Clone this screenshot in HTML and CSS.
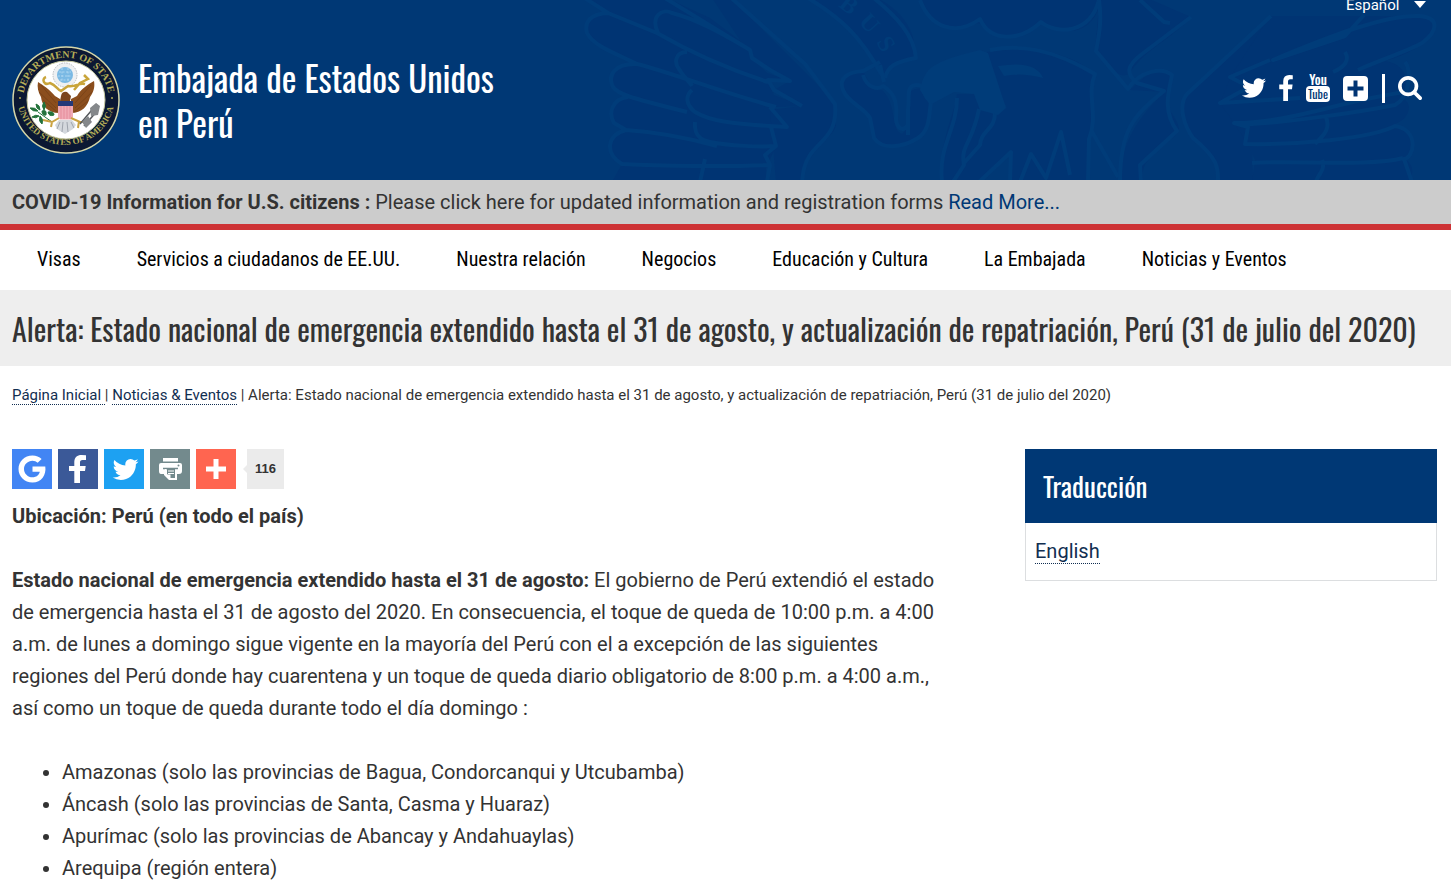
FILE: index.html
```html
<!DOCTYPE html>
<html lang="es">
<head>
<meta charset="utf-8">
<meta name="viewport" content="width=device-width, initial-scale=1">
<title>Embajada de Estados Unidos en Perú</title>
<link rel="stylesheet" href="styles.css">
</head>
<body>
<header class="site-header">
  <svg class="header-art" viewBox="0 0 871 180" aria-hidden="true">
    <g class="art-shape">
      <path d="M0 -5L28 13C15 12 5 20 6 30C10 45 30 52 57 64C42 62 32 68 31 78C32 88 40 93 48 97C37 97 31 105 30 115C31 124 40 129 46 132C34 134 29 141 29 150C31 158 38 162 42 164L32 182H186V168L196 146L194 132L207 127L195 107L222 106L194 95L188 82L210 81L187 73L172 58L170 48L130 18L80 -5Z"/>
      <path d="M148 -5L256 103V125C253 140 225 150 222 182H196L190 110L222 106L194 90L210 81L172 58L130 -5Z" />
      <path d="M225 -5C265 20 285 40 296 66C300 75 304 80 304 76C310 65 320 62 332 60C340 45 330 10 290 -5Z"/>
      <path d="M283 71C268 72 260 77 262 88C266 104 290 110 292 122C291 140 300 146 310 146C340 144 350 130 351 110C354 95 342 82 330 92C325 105 332 127 322 134C310 130 318 105 302 90C292 91 288 80 283 71Z"/>
      <path d="M340 -5C346 15 355 30 378 29C392 25 398 20 405 26C425 45 450 38 461 22C480 35 515 40 522 -5Z"/>
      <path d="M407 52C455 44 500 55 515 77C505 100 516 120 508 140L509 182H432L430 155L400 182H363C358 140 375 115 377 94H394C400 120 420 105 427 108C415 80 405 65 407 52Z"/>
      <path d="M520 -5L515 52C530 66 540 80 548 74L560 60C575 45 595 35 611 17L560 -5Z"/>
      <path d="M550 90C568 72 578 68 590 71C595 80 586 98 588 108C600 125 605 132 586 142C570 155 560 165 563 182H540C540 140 563 112 585 92Z"/>
      <path d="M691 16L606 95C599 105 602 122 613 138C635 158 638 168 638 182H673L672 150L665 138L668 127L654 123L665 112L640 103L669 91L650 75L688 60C693 50 735 28 750 16Z"/>
      <path d="M690 16H845C858 18 854 34 840 45C830 53 818 57 805 61C825 64 832 80 820 98C833 100 832 118 815 124C837 130 835 154 823 158C834 164 834 172 829 182H672L675 160L665 140L654 123L640 103L651 76Z"/>
    </g>
    <g class="art-line">
      <path d="M0 -5L28 13L77 33C110 52 151 70 188 82M28 13C10 14 4 22 7 33C13 46 37 54 57 64M78 33C70 16 82 8 92 13C117 19 146 36 170 50L172 58L190 70L210 81L188 80L194 90L222 106M80 -5L170 50M57 64C35 63 27 75 33 87C38 94 47 97 107 112M57 64C90 72 140 92 196 107M107 52C95 52 94 63 99 69C104 78 110 82 112 86M48 97C32 99 28 113 34 123L46 130M112 90C105 96 106 105 115 112C130 121 150 124 207 127L190 107M115 122C114 135 120 140 130 142C150 146 180 147 196 146L191 127M46 130C80 132 115 140 137 146M46 130C27 135 24 153 42 164C80 166 146 167 190 165L187 182M125 159L120 182M196 146L185 155L190 165"/>
      <path d="M148 -5L225 64L255 104C258 135 240 140 230 155C224 164 223 172 222 182M223 -5C262 18 280 36 302 75M290 -5C318 17 334 36 336 58C315 62 308 66 305 78"/>
      <path d="M300 62L283 71C268 72 258 78 263 90C268 103 284 107 290 118L294 138C302 150 322 148 338 138C350 130 349 115 351 101C340 96 348 85 337 85C325 85 330 98 328 109V135M283 75C287 88 298 90 303 86C317 94 317 107 316 119C317 129 323 132 328 125M304 82L300 65"/>
      <path d="M340 0C350 27 375 37 400 19C410 42 440 42 461 22C477 35 510 34 519 0M410 50C440 44 473 49 515 74C506 95 519 115 509 139L508 182M377 98C377 130 358 145 362 182M399 109C392 145 380 145 384 165L373 182M384 163L400 145C401 130 415 130 415 113M399 182L431 152L430 182M440 182L451 154L466 178L481 132L490 175M511 130L538 177"/>
      <path d="M519 0C522 22 519 35 516 51L548 89C560 70 583 67 592 75C589 91 582 110 597 131L560 165L561 182M560 0L584 22L590 23M611 17L562 54C546 66 546 74 557 83L584 91C552 116 540 132 540 182M691 16L607 94C597 106 605 127 613 138C640 160 638 170 638 182"/>
      <path d="M784 15L765 36L693 60C750 36 807 14 840 16C860 18 858 31 842 43C828 51 795 62 778 70M765 52C770 60 765 67 753 72M690 60L650 77L669 87L640 103L720 98M654 123C710 123 760 101 825 92M825 62C832 70 830 97 815 105C780 112 710 122 672 124L654 123L668 127L665 144C715 145 790 139 815 126C840 130 834 158 824 159L832 182M745 115C753 130 740 138 735 144M672 163C715 160 790 167 823 158M742 160C746 170 738 174 736 182"/>
      <path class="art-solid" d="M340 90C345 68 350 62 400 50L408 53L426 108L418 115L400 110L394 94L374 92L350 105Z"/>
      <path class="art-solid" d="M418 66Q456 60 463 78Q442 72 424 76Z"/>
    </g>
    <text class="art-text" transform="translate(258 6) rotate(38)">B</text>
    <text class="art-text" transform="translate(278 22) rotate(48)">U</text>
    <text class="art-text" transform="translate(296 42) rotate(60)">S</text>
  </svg>

  <div class="language">
    <select class="language-select" aria-label="Idioma">
      <option>Español</option>
      <option>English</option>
    </select>
    <svg class="language-arrow" viewBox="0 0 12 7" aria-hidden="true"><path d="M0 0H12L6 7Z"/></svg>
  </div>

  <div class="masthead">
    <a class="brand" href="#">
      <svg class="seal" viewBox="0 0 108 108" role="img" aria-label="Department of State, United States of America">
        <defs>
          <path id="seal-top" d="M12.500 66A43 43 0 1 1 95.500 66"/>
          <path id="seal-bottom" d="M5 50A49 49 0 1 0 103 50"/>
        </defs>
        <circle cx="54" cy="54" r="53" fill="#0b1833" stroke="#d5d6a8" stroke-width="1.500"/>
        <circle cx="54" cy="54" r="39" fill="#fff" stroke="#c7c9a0"/>
        <text class="seal-text"><textPath href="#seal-top" startOffset="50%" text-anchor="middle">DEPARTMENT OF STATE</textPath></text>
        <text class="seal-text seal-text-lower"><textPath href="#seal-bottom" startOffset="50%" text-anchor="middle">UNITED STATES OF AMERICA</textPath></text>
        <circle cx="8" cy="52" r="1" fill="#b5ad57"/><circle cx="100" cy="52" r="1" fill="#b5ad57"/>
        <circle cx="53" cy="29" r="12" fill="#eef0f2" stroke="#b9bdc3" stroke-dasharray="1.500 1"/>
        <circle cx="53" cy="29" r="8" fill="#7ab9e4"/>
        <path d="M47 26h12M46 30h14M48 34h10M50 22v14M56 22v14" stroke="#b9dcf2" stroke-width=".8" stroke-dasharray="2 1.500"/>
        <path d="M47 67C36 67 30 60 29 51C26 46 25 41 26 36C31 39 37 43 43 50L48 53V69ZM59 67C70 67 76 60 78 51C82 46 83 40 82 35C75 39 69 43 65 50L59 53Z" fill="#8b4e1d"/>
        <path d="M29 39L44 57M27 46L44 62M31 54L45 66M79 39L63 57M80 46L63 62M76 55L62 66" stroke="#6f3d16" fill="none" stroke-width=".6"/>
        <path d="M34 31C29 33 32 40 38 37C44 39 45 43 49 45L56 40C63 42 67 36 73 38M72 29L76 33L68 37L62 44" stroke="#c9a53b" fill="none" stroke-width="2.500"/>
        <path d="M49 50Q50 45 55 46L59 50L58 55H48Z" fill="#7b451d"/>
        <path d="M47 74H60L64 79L61 83L53 88L45 83L43 79Z" fill="#d4d8dd"/>
        <path d="M48 76L45 83M51 76L50 86M55 76L56 86M59 76L62 82" stroke="#8f959f" stroke-width=".8"/>
        <path d="M46 56H61V71L59 73.500H48L46 71Z" fill="#f0aab5"/>
        <path d="M49 60V73M52 60V73M55 60V73M58 60V73" stroke="#e58c9b"/>
        <path d="M46 55H61V60H46Z" fill="#243878"/>
        <path d="M24 58q4 1 4 6q-4-1-4-6M18 62q5-1 8 3q-5 1-8-3M20 71q4-3 7-1q-3 3-7 1M32 56q3 4 0 8q-3-4 0-8M30 65q5-2 4 4q-4 1-4-4M28 70q4 3 2 8q-4-3-2-8M36 66q6-1 6 3q-5 2-6-3M26 66l14 10" fill="#23723b" stroke="#23723b" stroke-width="1"/>
        <path d="M31 74L40 76L47 72M59 72L68 76L77 76M40 76L39 81M67 75L66 82" stroke="#cba240" stroke-width="2" fill="none"/>
        <path d="M68 78L85 58M72 80L86 64" stroke="#55585c" stroke-width="1.500" fill="none"/>
        <path d="M78 62L84 57L88 60L86 69L79 70ZM70 76L76 70L80 76L74 82Z" fill="#85888b"/>
      </svg>
      <span class="brand-name">Embajada de Estados Unidos<br>en Perú</span>
    </a>
    <nav class="social" aria-label="Redes sociales">
      <a href="#" aria-label="Twitter"><svg class="ico ico-twitter" viewBox="44 256 1640 1344"><path d="M1684 408q-67 98-162 167 1 14 1 42 0 130-38 259.500t-115.500 248.500-184.500 210.500-258 146-323 54.500q-271 0-496-145 35 4 78 4 225 0 401-138-105-2-188-64.500t-114-159.500q33 5 61 5 43 0 85-11-112-23-185.500-111.500t-73.500-205.500v-4q68 38 146 41-66-44-105-115t-39-154q0-88 44-163 121 149 294.500 238.500t371.500 99.500q-8-38-8-74 0-134 94.500-228.500t228.500-94.500q140 0 236 102 109-21 205-78-37 115-142 178 93-10 186-50z"/></svg></a>
      <a href="#" aria-label="Facebook"><svg class="ico ico-facebook" viewBox="479 0 864 1664"><path d="M1343 12v264h-157q-86 0-116 36t-30 108v189h293l-39 296h-254v759h-306v-759h-255v-296h255v-218q0-186 104-288.500t277-102.500q147 0 228 12z"/></svg></a>
      <a href="#" aria-label="YouTube"><svg class="ico ico-youtube" viewBox="0 0 24 28"><text class="yt-you" x="12" y="10.500" text-anchor="middle">You</text><rect y="12" width="24" height="16" rx="4"/><text class="yt-tube" x="12" y="25" text-anchor="middle">Tube</text></svg></a>
      <a href="#" aria-label="Más"><svg class="ico ico-more" viewBox="0 0 25 25"><path fill-rule="evenodd" d="M4 0H21Q25 0 25 4V21Q25 25 21 25H4Q0 25 0 21V4Q0 0 4 0ZM10.500 4.500V10.500H4.500V14.500H10.500V20.500H14.500V14.500H20.500V10.500H14.500V4.500Z"/></svg></a>
      <span class="social-rule"></span>
      <button class="search" type="button" aria-label="Buscar"><svg class="ico ico-search" viewBox="64 128 1664 1664"><path d="M1216 832q0-185-131.500-316.500t-316.500-131.500-316.500 131.500-131.500 316.500 131.500 316.500 316.500 131.500 316.500-131.500 131.500-316.500zm512 832q0 52-38 90t-90 38q-54 0-90-38l-343-342q-179 124-399 124-143 0-273.500-55.500t-225-150-150-225-55.500-273.500 55.500-273.500 150-225 225-150 273.500-55.500 273.500 55.500 225 150 150 225 55.500 273.500q0 220-124 399l343 343q37 37 37 90z"/></svg></button>
    </nav>
  </div>
</header>

<div class="notice"><strong>COVID-19 Information for U.S. citizens :</strong> Please click here for updated information and registration forms <a href="#">Read More...</a></div>

<nav class="main-nav" aria-label="Principal">
  <a href="#">Visas</a>
  <a href="#">Servicios a ciudadanos de EE.UU.</a>
  <a href="#">Nuestra relación</a>
  <a href="#">Negocios</a>
  <a href="#">Educación y Cultura</a>
  <a href="#">La Embajada</a>
  <a href="#">Noticias y Eventos</a>
</nav>

<h1 class="page-title">Alerta: Estado nacional de emergencia extendido hasta el 31 de agosto, y actualización de repatriación, Perú (31 de julio del 2020)</h1>

<p class="breadcrumb"><a href="#">Página Inicial&nbsp;</a>| <a href="#">Noticias &amp; Eventos</a> | Alerta: Estado nacional de emergencia extendido hasta el 31 de agosto, y actualización de repatriación, Perú (31 de julio del 2020)</p>

<div class="layout">
  <main class="article">
    <div class="share">
      <a class="share-btn google" href="#" aria-label="Google"><svg viewBox="0 0 40 40"><path d="M20.500 17.500H33.300C34.500 26 29.500 33.500 20.500 33.500C12.500 33.500 6.500 27.500 6.500 20C6.500 12.500 12.500 6.500 20.500 6.500C24.200 6.500 27.300 7.900 29.600 10L25.700 13.800C24.300 12.500 22.500 11.800 20.500 11.800C15.800 11.800 12 15.400 12 20C12 24.600 15.800 28.300 20.500 28.300C24.500 28.300 27 26.200 27.800 22.800H20.500Z"/></svg></a>
      <a class="share-btn facebook" href="#" aria-label="Facebook"><svg viewBox="0 0 40 40"><path d="M28 6.300V11H24.700C22.500 11 22 12 22 13.700V17H27.700L27 22H22V34H16.300V22H11V17H16.300V13C16.300 8.500 19.200 6 23.500 6Q26.500 6 28 6.300Z"/></svg></a>
      <a class="share-btn twitter" href="#" aria-label="Twitter"><svg viewBox="-420 -350 2440 2440"><path d="M1684 408q-67 98-162 167 1 14 1 42 0 130-38 259.500t-115.500 248.500-184.500 210.500-258 146-323 54.500q-271 0-496-145 35 4 78 4 225 0 401-138-105-2-188-64.500t-114-159.500q33 5 61 5 43 0 85-11-112-23-185.500-111.500t-73.500-205.500v-4q68 38 146 41-66-44-105-115t-39-154q0-88 44-163 121 149 294.500 238.500t371.500 99.500q-8-38-8-74 0-134 94.500-228.500t228.500-94.500q140 0 236 102 109-21 205-78-37 115-142 178 93-10 186-50z"/></svg></a>
      <a class="share-btn print" href="#" aria-label="Imprimir"><svg viewBox="0 0 40 40"><path d="M13 9H28V12.500H13ZM11 14H30Q32 14 32 16V22Q32 25 29 25H27V31H19L14 26V25H11Q9 25 9 22V16Q9 14 11 14Z"/><path d="M13 19.500H28" stroke="#738a8d" stroke-width="1.500"/><path d="M17 20H25V29H20.500V25.500H17Z" fill="#738a8d"/><path d="M15.500 20V26Q19 25 19.500 30.500" fill="none" stroke="#fff"/><path d="M18 22H24M18 24.500H24" stroke="#fff" stroke-width="1.200"/><circle cx="28.500" cy="16.500" r="1" fill="#738a8d"/></svg></a>
      <a class="share-btn more" href="#" aria-label="Compartir"><svg viewBox="0 0 40 40"><path d="M17.500 10H22.500V17.500H30V22.500H22.500V30H17.500V22.500H10V17.500H17.500Z"/></svg></a>
      <span class="share-count">116</span>
    </div>
    <p><strong>Ubicación: Perú (en todo el país)</strong></p>
    <p><strong>Estado nacional de emergencia extendido hasta el 31 de agosto:</strong> El gobierno de Perú extendió el estado de emergencia hasta el 31 de agosto del 2020. En consecuencia, el toque de queda de 10:00 p.m. a 4:00 a.m. de lunes a domingo sigue vigente en la mayoría del Perú con el a excepción de las siguientes regiones del Perú donde hay cuarentena y un toque de queda diario obligatorio de 8:00 p.m. a 4:00 a.m., así como un toque de queda durante todo el día domingo :</p>
    <ul>
      <li>Amazonas (solo las provincias de Bagua, Condorcanqui y Utcubamba)</li>
      <li>Áncash (solo las provincias de Santa, Casma y Huaraz)</li>
      <li>Apurímac (solo las provincias de Abancay y Andahuaylas)</li>
      <li>Arequipa (región entera)</li>
    </ul>
  </main>
  <aside class="translation">
    <h2>Traducción</h2>
    <div class="translation-body"><a href="#">English</a></div>
  </aside>
</div>
</body>
</html>
```

FILE: styles.css
```css
* { box-sizing: border-box; }

body {
  margin: 0;
  background: #fff;
  color: #333;
  font: 20px/32px Roboto, sans-serif;
}

a { color: #112e51; text-decoration: none; }

/* Header */
.site-header {
  position: relative;
  min-height: 180px;
  overflow: hidden;
  background: #003875;
  color: #fff;
}
.site-header a { color: #fff; }

.header-art {
  position: absolute;
  top: 0;
  right: 0;
  width: 871px;
  height: 180px;
}
.art-shape { fill: #003473; }
.art-line { fill: none; stroke: #003c79; stroke-width: 4; stroke-linejoin: round; }
.art-solid { fill: #003c79; stroke: none; }
.art-text { fill: #003c79; font: bold 24px "Liberation Serif", serif; }

.language {
  position: relative;
  display: flex;
  align-items: flex-end;
  justify-content: flex-end;
  gap: 14px;
  height: 15px;
  padding-right: 25px;
}
.language-select {
  flex: none;
  height: 20px;
  padding: 0;
  border: 0;
  appearance: none;
  background: transparent;
  color: #fff;
  font: 15px/20px Roboto, sans-serif;
}
.language-arrow { width: 12px; height: 7px; margin-bottom: 7px; fill: #fff; }

.masthead {
  position: relative;
  display: flex;
  align-items: center;
  justify-content: space-between;
  padding: 31px 29px 26px 12px;
}
.brand { display: flex; align-items: center; gap: 18px; }
.seal { width: 108px; height: 108px; }
.seal-text { fill: #b5ad57; font: bold 10px "Liberation Serif", serif; }
.seal-text-lower { font-size: 9px; }
.brand-name { font: 35px/45px Oswald, "Roboto Condensed", sans-serif; }

.social { display: flex; align-items: center; gap: 13px; margin-bottom: 24px; }
.social a, .search { display: flex; }
.ico { display: block; fill: #fff; }
.ico-twitter { width: 25px; height: 21px; }
.ico-facebook { width: 14px; height: 26px; }
.ico-youtube { width: 24px; height: 28px; overflow: visible; }
.ico-more { width: 25px; height: 25px; }
.ico-search { width: 24px; height: 24px; }
.yt-you { font: 500 13px Oswald, "Roboto Condensed", sans-serif; }
.yt-tube { fill: #003875; font: 400 12px Oswald, "Roboto Condensed", sans-serif; }
.social-rule { width: 3px; height: 29px; margin-left: 1px; background: #fff; }
.search { padding: 0; border: 0; background: none; }

/* Notice and navigation */
.notice {
  padding: 6px 12px;
  border-bottom: 6px solid #cd3235;
  background: #ccc;
}
.notice a { color: #003875; }

.main-nav {
  display: flex;
  flex-wrap: wrap;
  gap: 0 56px;
  padding: 13px 37px 15px;
}
.main-nav a {
  color: #000;
  font-family: "Roboto Condensed", Roboto, sans-serif;
}

.page-title {
  margin: 0;
  padding: 17px 12px 15px;
  background: #eee;
  font: 30px/44px Oswald, "Roboto Condensed", sans-serif;
}

.breadcrumb {
  margin: 0;
  padding: 17px 12px 0;
  font-size: 15px;
  line-height: 24px;
}
.breadcrumb a, .translation a { border-bottom: 1px dotted #112e51; }

/* Content */
.layout {
  display: grid;
  grid-template-columns: 930fr 412fr;
  align-items: start;
  gap: 83px;
  padding: 42px 14px 0 12px;
}
.article p { margin: 0 0 32px; }
.article ul { margin: 0; padding-left: 50px; }

.share { display: flex; gap: 6px; margin-bottom: 11px; }
.share-btn { width: 40px; height: 40px; }
.share-btn svg { display: block; width: 40px; height: 40px; fill: #fff; }
.google { background: #4285f4; }
.facebook { background: #3b5998; }
.twitter { background: #1da1f2; }
.print { background: #738a8d; }
.more { background: #ff6550; }
.share-count {
  position: relative;
  height: 40px;
  margin-left: 5px;
  padding: 0 8px;
  background: #ebebeb;
  font: bold 13px/40px "Liberation Sans", sans-serif;
}
.share-count::before {
  content: "";
  position: absolute;
  top: 16px;
  left: -4px;
  border: solid transparent;
  border-width: 4px 4px 4px 0;
  border-right-color: #ebebeb;
}

.translation h2 {
  margin: 0;
  padding: 16px 18px;
  background: #003875;
  color: #fff;
  font: 400 27px/42px Oswald, "Roboto Condensed", sans-serif;
}
.translation-body {
  padding: 12px 9px 13px;
  border: 1px solid #dcdee0;
  border-top: 0;
}
```
